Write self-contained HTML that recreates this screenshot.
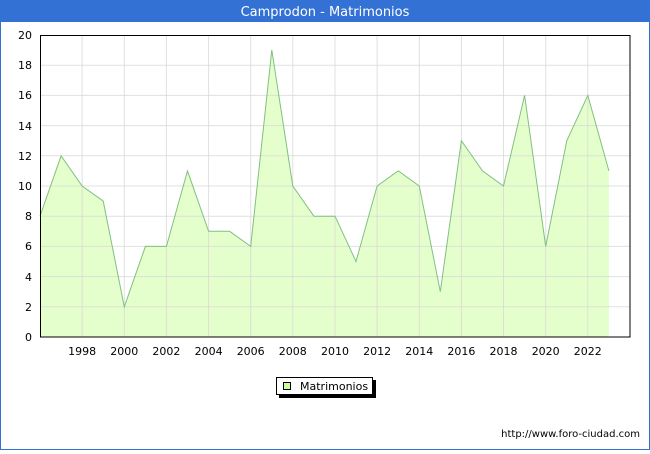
<!DOCTYPE html>
<html><head><meta charset="utf-8"><style>
body{margin:0;width:650px;height:450px;overflow:hidden;background:#fff;font-family:"DejaVu Sans","Liberation Sans",sans-serif}
</style></head><body>
<svg width="650" height="450" xmlns="http://www.w3.org/2000/svg" font-family="DejaVu Sans, Liberation Sans, sans-serif">
<rect x="0.5" y="0.5" width="649" height="449" fill="#fff" stroke="#3371d4"/>
<rect x="0" y="0" width="650" height="22" fill="#3371d4"/>
<text x="325" y="16" font-size="13" fill="#fff" text-anchor="middle">Camprodon - Matrimonios</text>
<polygon fill="#e5ffcc" stroke="none" points="40,337 40,216.2 61.1,155.8 82.1,186 103.2,201.1 124.3,306.8 145.4,246.4 166.4,246.4 187.5,170.9 208.6,231.3 229.6,231.3 250.7,246.4 271.8,50.1 292.8,186 313.9,216.2 335,216.2 356,261.5 377.1,186 398.2,170.9 419.3,186 440.3,291.7 461.4,140.7 482.5,170.9 503.5,186 524.6,95.4 545.7,246.4 566.8,140.7 587.8,95.4 608.9,170.9 608.9,337"/>
<g stroke="#d8d8d8" stroke-width="1" stroke-opacity="0.8">
<line x1="40" x2="630" y1="306.8" y2="306.8"/><line x1="40" x2="630" y1="276.6" y2="276.6"/>
<line x1="40" x2="630" y1="246.4" y2="246.4"/><line x1="40" x2="630" y1="216.2" y2="216.2"/>
<line x1="40" x2="630" y1="186" y2="186"/><line x1="40" x2="630" y1="155.8" y2="155.8"/>
<line x1="40" x2="630" y1="125.6" y2="125.6"/><line x1="40" x2="630" y1="95.4" y2="95.4"/>
<line x1="40" x2="630" y1="65.2" y2="65.2"/>
<line x1="82.1" x2="82.1" y1="35" y2="337"/><line x1="124.3" x2="124.3" y1="35" y2="337"/>
<line x1="166.4" x2="166.4" y1="35" y2="337"/><line x1="208.6" x2="208.6" y1="35" y2="337"/>
<line x1="250.7" x2="250.7" y1="35" y2="337"/><line x1="292.8" x2="292.8" y1="35" y2="337"/>
<line x1="335" x2="335" y1="35" y2="337"/><line x1="377.1" x2="377.1" y1="35" y2="337"/>
<line x1="419.3" x2="419.3" y1="35" y2="337"/><line x1="461.4" x2="461.4" y1="35" y2="337"/>
<line x1="503.5" x2="503.5" y1="35" y2="337"/><line x1="545.7" x2="545.7" y1="35" y2="337"/>
<line x1="587.8" x2="587.8" y1="35" y2="337"/>
</g>
<polyline fill="none" stroke="#80c080" stroke-width="1" points="40,216.2 61.1,155.8 82.1,186 103.2,201.1 124.3,306.8 145.4,246.4 166.4,246.4 187.5,170.9 208.6,231.3 229.6,231.3 250.7,246.4 271.8,50.1 292.8,186 313.9,216.2 335,216.2 356,261.5 377.1,186 398.2,170.9 419.3,186 440.3,291.7 461.4,140.7 482.5,170.9 503.5,186 524.6,95.4 545.7,246.4 566.8,140.7 587.8,95.4 608.9,170.9"/>
<rect x="40.5" y="35.5" width="589.5" height="301.5" fill="none" stroke="#000"/>
<g font-size="11" fill="#000" text-anchor="end">
<text x="32" y="341">0</text><text x="32" y="311">2</text><text x="32" y="281">4</text>
<text x="32" y="250">6</text><text x="32" y="220">8</text><text x="32" y="190">10</text>
<text x="32" y="160">12</text><text x="32" y="130">14</text><text x="32" y="99">16</text>
<text x="32" y="69">18</text><text x="32" y="39">20</text>
</g>
<g font-size="11" fill="#000" text-anchor="middle">
<text x="82.1" y="355">1998</text><text x="124.3" y="355">2000</text><text x="166.4" y="355">2002</text>
<text x="208.6" y="355">2004</text><text x="250.7" y="355">2006</text><text x="292.8" y="355">2008</text>
<text x="335" y="355">2010</text><text x="377.1" y="355">2012</text><text x="419.3" y="355">2014</text>
<text x="461.4" y="355">2016</text><text x="503.5" y="355">2018</text><text x="545.7" y="355">2020</text>
<text x="587.8" y="355">2022</text>
</g>
<rect x="279" y="380" width="97" height="18" fill="#000"/>
<rect x="276.5" y="377.5" width="96" height="17" fill="#fff" stroke="#000"/>
<rect x="283.5" y="382.5" width="7" height="7" fill="#ccff99" stroke="#000"/>
<text x="300" y="390" font-size="11" fill="#000">Matrimonios</text>
<text x="640" y="437" font-size="10" fill="#000" text-anchor="end">http://www.foro-ciudad.com</text>
</svg>
</body></html>
